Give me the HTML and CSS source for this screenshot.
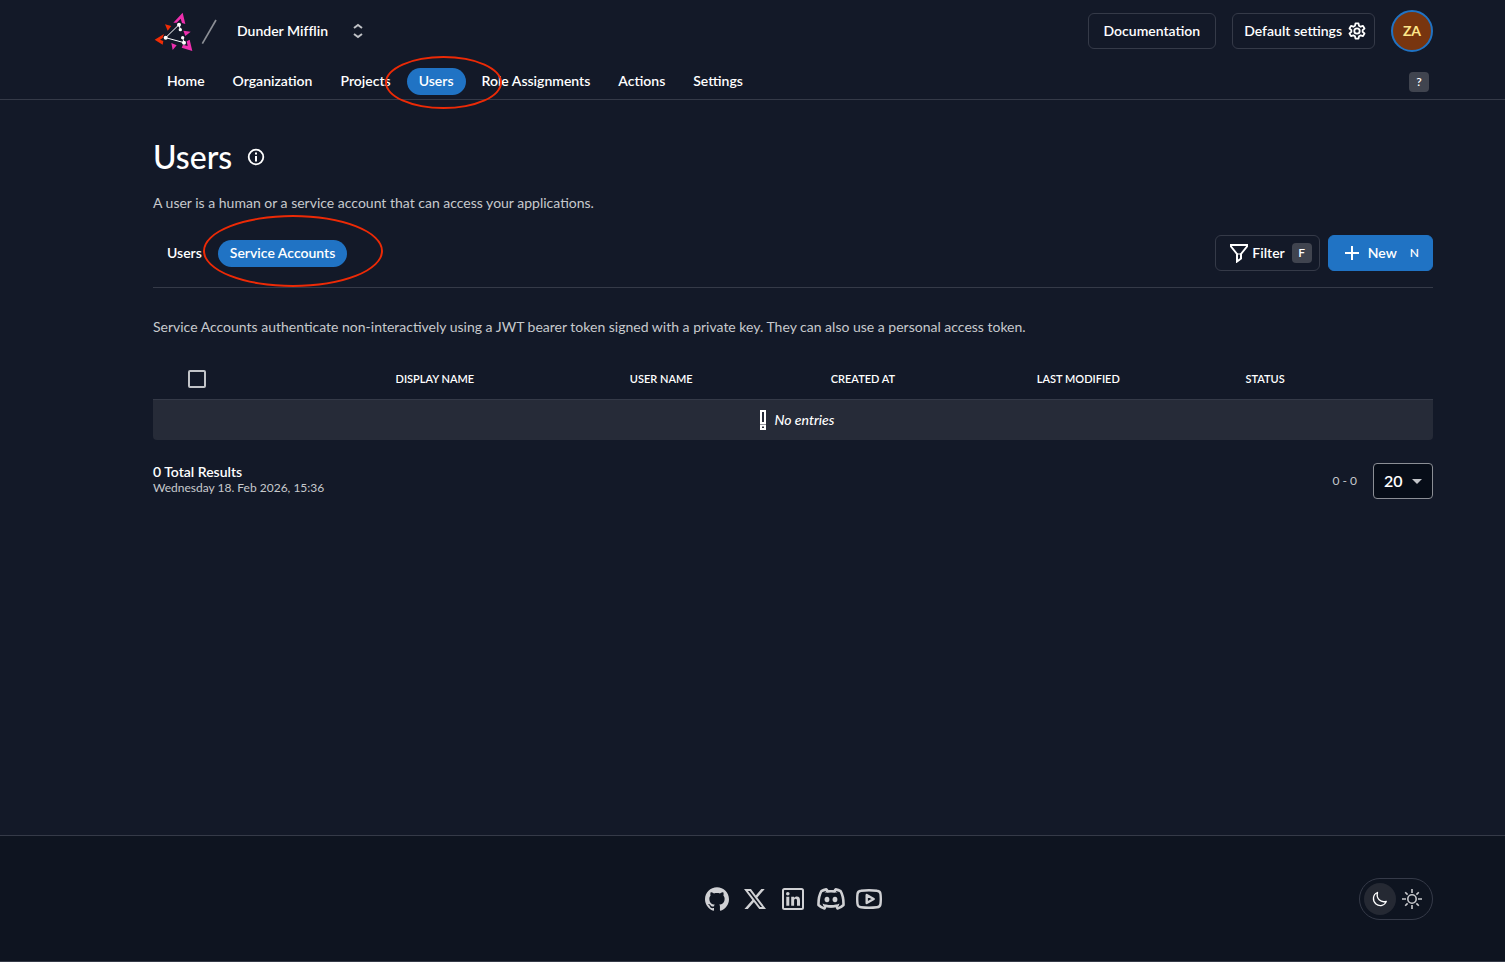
FILE: index.html
```html
<!DOCTYPE html>
<html lang="en">
<head>
    <meta charset="utf-8">
    <meta name="viewport" content="width=device-width, initial-scale=1">
    <title>Users</title>
    <link rel="stylesheet" href="styles.css">
</head>
<body>
    <header class="header">
        <div class="topbar">
            <a href="#" class="logo" aria-label="Home">
                <svg width="67" height="50" viewBox="9 0 201 150">
                    <path fill="#f02c05" d="M14 101 42 84 38 96 30 101 40 105 38 116ZM45 55 64 60 53 74Z"/>
                    <path fill="#ee2fae" d="M98 20 106 54 96 51 92 38 80 50 70 50ZM127 135 95 125 99 116 113 120 110 106 119 101ZM100 74 122 77 106 90ZM64 111 80 118 68 132Z"/>
                    <path stroke="#fff" stroke-width="3" fill="none" d="M91 71 87 56 47 95 102 110 98 95"/>
                    <g fill="#fff"><circle cx="87" cy="56" r="6"/><circle cx="91" cy="71" r="5"/><circle cx="47" cy="95" r="6"/><circle cx="98" cy="95" r="5"/><circle cx="102" cy="110" r="6"/></g>
                    <path stroke="#8c8f96" stroke-width="5" d="M198 42 157 113"/>
                </svg>
            </a>
            <button class="org">
                Dunder Mifflin
                <svg width="12" height="16" viewBox="0 0 12 16" fill="none" stroke="#c0c2c6" stroke-width="2"><path d="M2 5 6 2 10 5M2 11 6 14 10 11"/></svg>
            </button>
            <div class="actions">
                <a href="#" class="btn">Documentation</a>
                <button class="btn btn-settings">
                    Default settings
                    <svg width="18" height="18" viewBox="0 0 24 24" fill="none" stroke="#fff" stroke-width="2.4" stroke-linejoin="round"><path d="M10 1.8h4l.7 3.3 2.1 1.2 3.2-1.1 2 3.5-2.5 2.2v2.3l2.5 2.2-2 3.5-3.2-1.1-2.1 1.2-.7 3.2h-4l-.7-3.2-2.1-1.2L4 18.9l-2-3.5 2.5-2.2v-2.3L2 8.7l2-3.5 3.200 1.100 2.100-1.200Z"/><circle cx="12" cy="12" r="3.6"/></svg>
                </button>
                <button class="avatar">ZA</button>
            </div>
        </div>
        <nav class="nav">
            <a href="#" class="tab">Home</a>
            <a href="#" class="tab">Organization</a>
            <a href="#" class="tab">Projects</a>
            <a href="#" class="tab active">Users<span class="mark mark-nav"></span></a>
            <a href="#" class="tab">Role Assignments</a>
            <a href="#" class="tab">Actions</a>
            <a href="#" class="tab">Settings</a>
            <button class="key help">?</button>
        </nav>
    </header>

    <main class="main">
        <div class="title">
            <h1>Users</h1>
            <button class="info" aria-label="Info">
                <svg width="18" height="18" viewBox="0 0 18 18"><circle cx="9" cy="9" r="7.3" fill="none" stroke="#fff" stroke-width="1.8"/><path fill="#fff" d="M8 4.500h2v2H8zM8 8h2v5.500H8z"/></svg>
            </button>
        </div>
        <p class="text">A user is a human or a service account that can access your applications.</p>

        <div class="toolbar">
            <a href="#" class="tab">Users</a>
            <a href="#" class="tab active">Service Accounts<span class="mark mark-tab"></span></a>
            <div class="tools">
                <button class="btn btn-filter">
                    <svg width="20" height="20" viewBox="0 0 20 20" fill="none" stroke="#fff" stroke-width="2"><path d="M2 2h16v1.500L12 11v4.500L8 18.500V11L2 3.500Z"/><path stroke-width="1" d="M8 11h4"/></svg>
                    Filter
                    <span class="key">F</span>
                </button>
                <button class="btn btn-new">
                    <svg width="16" height="16" viewBox="0 0 16 16" stroke="#fff" stroke-width="2"><path d="M8 1v14M1 8h14"/></svg>
                    New
                    <span class="hint">N</span>
                </button>
            </div>
        </div>

        <p class="text">Service Accounts authenticate non-interactively using a JWT bearer token signed with a private key. They can also use a personal access token.</p>

        <table class="table">
            <thead>
                <tr>
                    <th class="col-check"><input type="checkbox" class="check" aria-label="Select all"></th>
                    <th class="col-display">Display name</th>
                    <th class="col-user">User name</th>
                    <th class="col-created">Created at</th>
                    <th class="col-modified">Last modified</th>
                    <th class="col-status">Status</th>
                </tr>
            </thead>
            <tbody>
                <tr>
                    <td colspan="6">
                        <div class="empty">
                            <svg width="6" height="20" viewBox="0 0 6 20" fill="none" stroke="#fff" stroke-width="2"><path d="M1 1h4v12H1zM1 15.500h4V19H1z"/></svg>
                            No entries
                        </div>
                    </td>
                </tr>
            </tbody>
        </table>

        <div class="paginator">
            <div class="results">
                <div class="total">0 Total Results</div>
                <div class="date">Wednesday 18. Feb 2026, 15:36</div>
            </div>
            <span class="range">0 - 0</span>
            <div class="page-size">
                <select aria-label="Page size">
                    <option>20</option>
                    <option>50</option>
                    <option>100</option>
                </select>
            </div>
        </div>
    </main>

    <footer class="footer">
        <div class="social">
            <a href="#" aria-label="GitHub"><svg width="24" height="24" viewBox="0 0 24 24"><path d="M12 .297c-6.630 0-12 5.373-12 12 0 5.303 3.438 9.800 8.205 11.385.6.113.82-.258.82-.577 0-.285-.01-1.040-.015-2.040-3.338.724-4.042-1.610-4.042-1.610C4.422 18.070 3.633 17.700 3.633 17.700c-1.087-.744.084-.729.084-.729 1.205.084 1.838 1.236 1.838 1.236 1.070 1.835 2.809 1.305 3.495.998.108-.776.417-1.305.76-1.605-2.665-.3-5.466-1.332-5.466-5.930 0-1.310.465-2.380 1.235-3.220-.135-.303-.54-1.523.105-3.176 0 0 1.005-.322 3.300 1.230.96-.267 1.980-.399 3-.405 1.020.006 2.040.138 3 .405 2.280-1.552 3.285-1.230 3.285-1.230.645 1.653.24 2.873.12 3.176.765.84 1.230 1.910 1.230 3.220 0 4.610-2.805 5.625-5.475 5.920.42.36.81 1.096.81 2.220 0 1.606-.015 2.896-.015 3.286 0 .315.21.69.825.57C20.565 22.092 24 17.592 24 12.297c0-6.627-5.373-12-12-12"/></svg></a>
            <a href="#" aria-label="X"><svg width="22" height="22" viewBox="0 0 24 24"><path d="M18.901 1.153h3.680l-8.040 9.190L24 22.846h-7.406l-5.800-7.584-6.638 7.584H.474l8.600-9.830L0 1.154h7.594l5.243 6.932ZM17.610 20.644h2.039L6.486 3.240H4.298Z"/></svg></a>
            <a href="#" aria-label="LinkedIn"><svg width="22" height="22" viewBox="0 0 22 22"><path fill="none" stroke="#d0d1d4" stroke-width="2" d="M2.500 1h17Q21 1 21 2.500v17q0 1.500-1.500 1.500h-17Q1 21 1 19.500v-17Q1 1 2.500 1Z"/><circle cx="5.800" cy="5.800" r="1.800"/><path d="M4.300 8.700h3v9h-3zM9.200 8.700h2.800v1.200c.6-1 1.600-1.500 2.800-1.500 2.500 0 3.200 1.600 3.200 4v5.300h-3v-4.800c0-1.200-.2-2.200-1.400-2.200s-1.500 1-1.500 2.100v4.900H9.200z"/></svg></a>
            <a href="#" aria-label="Discord"><svg width="28" height="22" viewBox="0 0 28 22"><path fill="none" stroke="#d0d1d4" stroke-width="2.600" stroke-linejoin="round" d="M10 2.200 9.300 1.400Q6.500 1.900 4.400 3.200 1.300 8.500 1.500 17q2.500 2.500 6 3.500l1.300-2.800q5.200 1.400 10.400 0l1.300 2.800q3.500-1 6-3.500.2-8.500-2.900-13.800-2.100-1.300-4.900-1.800L18 2.200l-.5 1.300q-3.500-.6-7 0Z"/><path d="M10 2.500q4-.8 8 0l2.500 2.200q-6.500-2-13 0ZM5.500 15.500q8.500 4.500 17 0l-1 2.700q-7.500 2.600-15 0Z"/><ellipse cx="10" cy="11.500" rx="2.400" ry="2.700"/><ellipse cx="18" cy="11.500" rx="2.400" ry="2.700"/></svg></a>
            <a href="#" aria-label="YouTube"><svg width="26" height="20" viewBox="0 0 26 20"><path fill="none" stroke="#d0d1d4" stroke-width="2.400" stroke-linejoin="round" d="M5 1.700q8-1 16 0 3.200.3 3.500 3.300.6 5 0 10-.3 3-3.500 3.300-8 1-16 0-3.200-.3-3.500-3.300-.6-5 0-10Q1.800 2 5 1.700ZM10.700 6v8l7-4Z"/></svg></a>
        </div>
        <div class="theme">
            <button class="theme-btn selected" aria-label="Dark theme"><svg width="16" height="16" viewBox="0 0 16 16" fill="none" stroke="#fff" stroke-width="1.300" stroke-linejoin="round"><path d="M5.500 1.500C.5 3.500.3 10 4 13c3.500 2.800 8.800 1.700 10.300-2.600C8.500 12 4 7.500 5.500 1.500Z"/></svg></button>
            <button class="theme-btn" aria-label="Light theme"><svg width="20" height="20" viewBox="0 0 20 20" fill="none" stroke="#c8c9cc" stroke-width="1.600"><circle cx="10" cy="10" r="4.200"/><path d="M10 0v4M10 16v4M0 10h4M16 10h4M3.200 3.200l2.400 2.400M14.400 14.400l2.400 2.400M3.200 16.800l2.400-2.400M14.400 5.600l2.400-2.400"/></svg></button>
        </div>
    </footer>
</body>
</html>
```
FILE: styles.css
```css
* { box-sizing: border-box; }
body { margin: 0; min-height: 100vh; display: flex; flex-direction: column; background: #131928; color: #fff; font-family: Lato, sans-serif; font-size: 14px; font-weight: 600; line-height: 20px; }
a { color: inherit; text-decoration: none; }
button { font: inherit; color: inherit; background: none; border: none; padding: 0; cursor: pointer; }
svg { display: block; flex: none; }
p { margin: 0; }

.header, .main, .footer { padding-left: 153px; padding-right: 72px; }
.header { border-bottom: 1px solid #353a48; }
.topbar { display: flex; align-items: center; height: 62px; }
.org { display: flex; align-items: center; gap: 24px; margin-left: 17px; font-variant-ligatures: none; }
.actions { display: flex; align-items: center; gap: 16px; margin-left: auto; }
.btn { display: flex; align-items: center; height: 36px; padding: 0 15px; border: 1px solid #353a48; border-radius: 6px; }
.btn-settings { gap: 6px; padding: 0 8px 0 11px; }
.avatar { width: 42px; height: 42px; border: 2px solid #2073c4; border-radius: 50%; background: #78350f; color: #fde68a; font-weight: 700; }

.nav { display: flex; align-items: center; gap: 4px; padding: 6px 4px 4px 2px; }
.tab { position: relative; padding: 0 12px 1px; border-radius: 14px; line-height: 26px; }
.tab.active { background: #2073c4; }
.key { display: flex; align-items: center; justify-content: center; width: 20px; height: 20px; border-radius: 4px; background: #40444f; font-size: 12px; }
.help { margin-left: auto; }

/* red highlight rings */
.mark { position: absolute; border: 2px solid #ec2a06; border-radius: 50%; pointer-events: none; z-index: 1; }
.mark-nav { inset: -12px -36px -14px -22px; }
.mark-tab { inset: -25px -36px -20px -15px; }

.main { flex: 1; padding-top: 37px; }
.title { display: flex; align-items: center; gap: 15px; margin-bottom: 16px; }
h1 { margin: 0; font-size: 32px; line-height: 40px; font-weight: 500; }
.text { color: #c7c9cd; font-weight: 400; }
.toolbar { display: flex; align-items: center; gap: 4px; margin: 22px 0 29px; padding: 0 0 16px 2px; border-bottom: 1px solid #353a48; }
.tools { display: flex; gap: 8px; margin-left: auto; }
.btn-filter { padding: 0 7px 0 13px; gap: 3px; }
.btn-filter .key { margin-left: 4px; }
.btn-new { gap: 8px; background: #2073c4; border-color: #2073c4; padding: 0 13px 0 15px; }
.hint { margin-left: 5px; font-size: 12px; }

.table { width: 100%; margin-top: 21px; border-collapse: separate; border-spacing: 0; table-layout: fixed; }
th { height: 42px; padding: 0 16px; border-bottom: 1px solid #353a48; text-align: left; text-transform: uppercase; font-size: 11px; font-weight: 600; }
.col-check { width: 17.7%; padding-left: 35px; }
.col-display { width: 18.3%; }
.col-user { width: 15.7%; }
.col-created { width: 16.1%; }
.col-modified { width: 16.3%; }
.check { display: block; appearance: none; width: 18px; height: 18px; margin: 0; border: 2px solid #c2c4c8; border-radius: 2px; }
td { height: 40px; padding: 0; background: #262b38; border-radius: 0 0 4px 4px; }
.empty { display: flex; align-items: center; justify-content: center; gap: 9px; padding-left: 8px; font-style: italic; font-weight: 500; }

.paginator { display: flex; align-items: center; margin-top: 23px; }
.results { padding-bottom: 2px; }
.total { line-height: 16px; }
.date, .range { color: #c7c9cd; font-size: 12px; line-height: 16px; font-weight: 400; }
.range { margin-left: auto; margin-right: 16px; }
.page-size { position: relative; }
.page-size select { display: block; appearance: none; width: 60px; height: 36px; padding: 0 10px; border: 1px solid #8b8e95; border-radius: 4px; background: #070d18; color: #fff; font: inherit; font-size: 16px; }
.page-size::after { content: ""; position: absolute; right: 11px; top: 16px; border: 5px solid transparent; border-top-color: #c2c4c8; border-bottom: none; pointer-events: none; }

.footer { display: grid; grid-template-columns: 1fr auto 1fr; align-items: center; height: 127px; border-top: 1px solid #353a48; border-bottom: 1px solid #353a48; background: #0e1420; }
.social { grid-column: 2; display: flex; gap: 10px; fill: #d0d1d4; }
.social a { display: flex; align-items: center; justify-content: center; width: 28px; height: 28px; }
.theme { display: flex; justify-self: end; padding: 4px; border: 1px solid #353a48; border-radius: 21px; }
.theme-btn { display: flex; align-items: center; justify-content: center; width: 32px; height: 32px; border-radius: 50%; }
.theme-btn.selected { background: #252933; }
```
